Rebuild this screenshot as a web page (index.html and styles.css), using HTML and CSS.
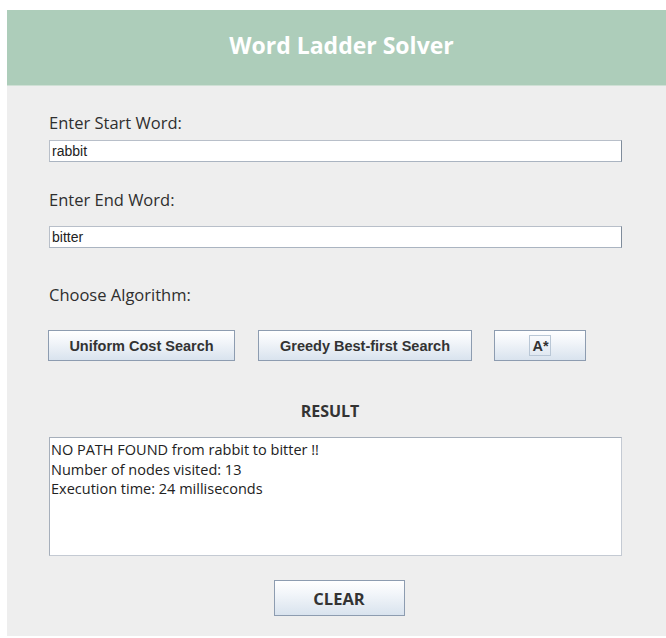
FILE: index.html
```html
<!DOCTYPE html>
<html>
<head>
<meta charset="utf-8">
<link rel="stylesheet" href="styles.css">
</head>
<body>
<div class="window">
  <div class="header">Word Ladder Solver</div>
  <div class="content">
    <div class="label l1">Enter Start Word:</div>
    <input class="field f1" type="text" value="rabbit">
    <div class="label l2">Enter End Word:</div>
    <input class="field f2" type="text" value="bitter">
    <div class="label l3">Choose Algorithm:</div>
    <div class="algos">
      <button class="btn ucs">Uniform Cost Search</button>
      <button class="btn gbfs">Greedy Best-first Search</button>
      <button class="btn astar"><span class="focus">A*</span></button>
    </div>
    <div class="result-title">RESULT</div>
    <div class="result">NO PATH FOUND from rabbit to bitter !!<br>Number of nodes visited: 13<br>Execution time: 24 milliseconds</div>
    <div class="clear-row"><button class="btn clear">CLEAR</button></div>
  </div>
</div>
</body>
</html>
```
FILE: styles.css
```css
html, body {
  margin: 0;
  padding: 0;
  background: #ffffff;
}
.window {
  margin: 10px 0 0 7px;
  width: 659px;
  height: 626px;
  background: #eeeeee;
  display: flex;
  flex-direction: column;
}
.header {
  height: 76px;
  box-sizing: border-box;
  background: #adcdba;
  border-bottom: 1px solid #cfe0d5;
  color: #ffffff;
  font-family: "Open Sans", sans-serif;
  font-weight: 700;
  font-size: 23px;
  display: flex;
  align-items: center;
  justify-content: center;
  padding: 0 0 5px 10px;
}
.content {
  padding: 27px 37px 0 42px;
  display: flex;
  flex-direction: column;
  align-items: flex-start;
}
.label {
  font-family: "Open Sans", sans-serif;
  font-size: 16.5px;
  line-height: 20px;
  color: #2e2e2e;
}
.l1 { margin-bottom: 7px; }
.l2 { margin-top: 28px; margin-bottom: 16px; }
.l3 { margin-top: 37px; margin-bottom: 25px; }
.field {
  width: 573px;
  height: 22px;
  box-sizing: border-box;
  margin: 0;
  padding: 0 2px;
  border: 1px solid;
  border-color: #b8bfc9 #7f8c9b #aab4c1 #b8bfc9;
  background: #ffffff;
  font-family: "Liberation Sans", Arial, sans-serif;
  font-size: 14px;
  color: #222222;
  outline: none;
}
.algos {
  display: flex;
  gap: 23px;
  margin-left: -1px;
}
.btn {
  height: 31px;
  box-sizing: border-box;
  margin: 0;
  padding: 0;
  border: 1px solid #8d9cb0;
  background: linear-gradient(#ffffff 0%, #f3f6fa 35%, #d9e3ee 100%);
  font-family: "Liberation Sans", Arial, sans-serif;
  font-weight: 700;
  font-size: 14.5px;
  color: #333333;
  display: flex;
  align-items: center;
  justify-content: center;
}
.ucs { width: 187px; }
.gbfs { width: 214px; }
.astar { width: 92px; margin-left: -1px; }
.focus {
  border: 1px solid #b9c7d6;
  padding: 2px 1px 1px 2px;
  line-height: 16px;
}
.result-title {
  align-self: stretch;
  text-align: center;
  margin-top: 40px;
  padding-right: 18px;
  font-family: "Open Sans", sans-serif;
  font-weight: 700;
  font-size: 16px;
  line-height: 20px;
  color: #333333;
}
.result {
  margin-top: 16px;
  width: 573px;
  height: 119px;
  box-sizing: border-box;
  border: 1px solid;
  border-color: #a6afbb #c4cad3 #c4cad3 #a6afbb;
  background: #ffffff;
  padding: 2px 1px;
  font-family: "Open Sans", sans-serif;
  font-size: 14.5px;
  line-height: 19.5px;
  color: #222222;
}
.clear-row {
  align-self: stretch;
  display: flex;
  justify-content: center;
  margin-top: 24px;
}
.clear {
  width: 131px;
  height: 36px;
  font-family: "Open Sans", sans-serif;
  font-size: 16.5px;
  color: #333333;
}
```
